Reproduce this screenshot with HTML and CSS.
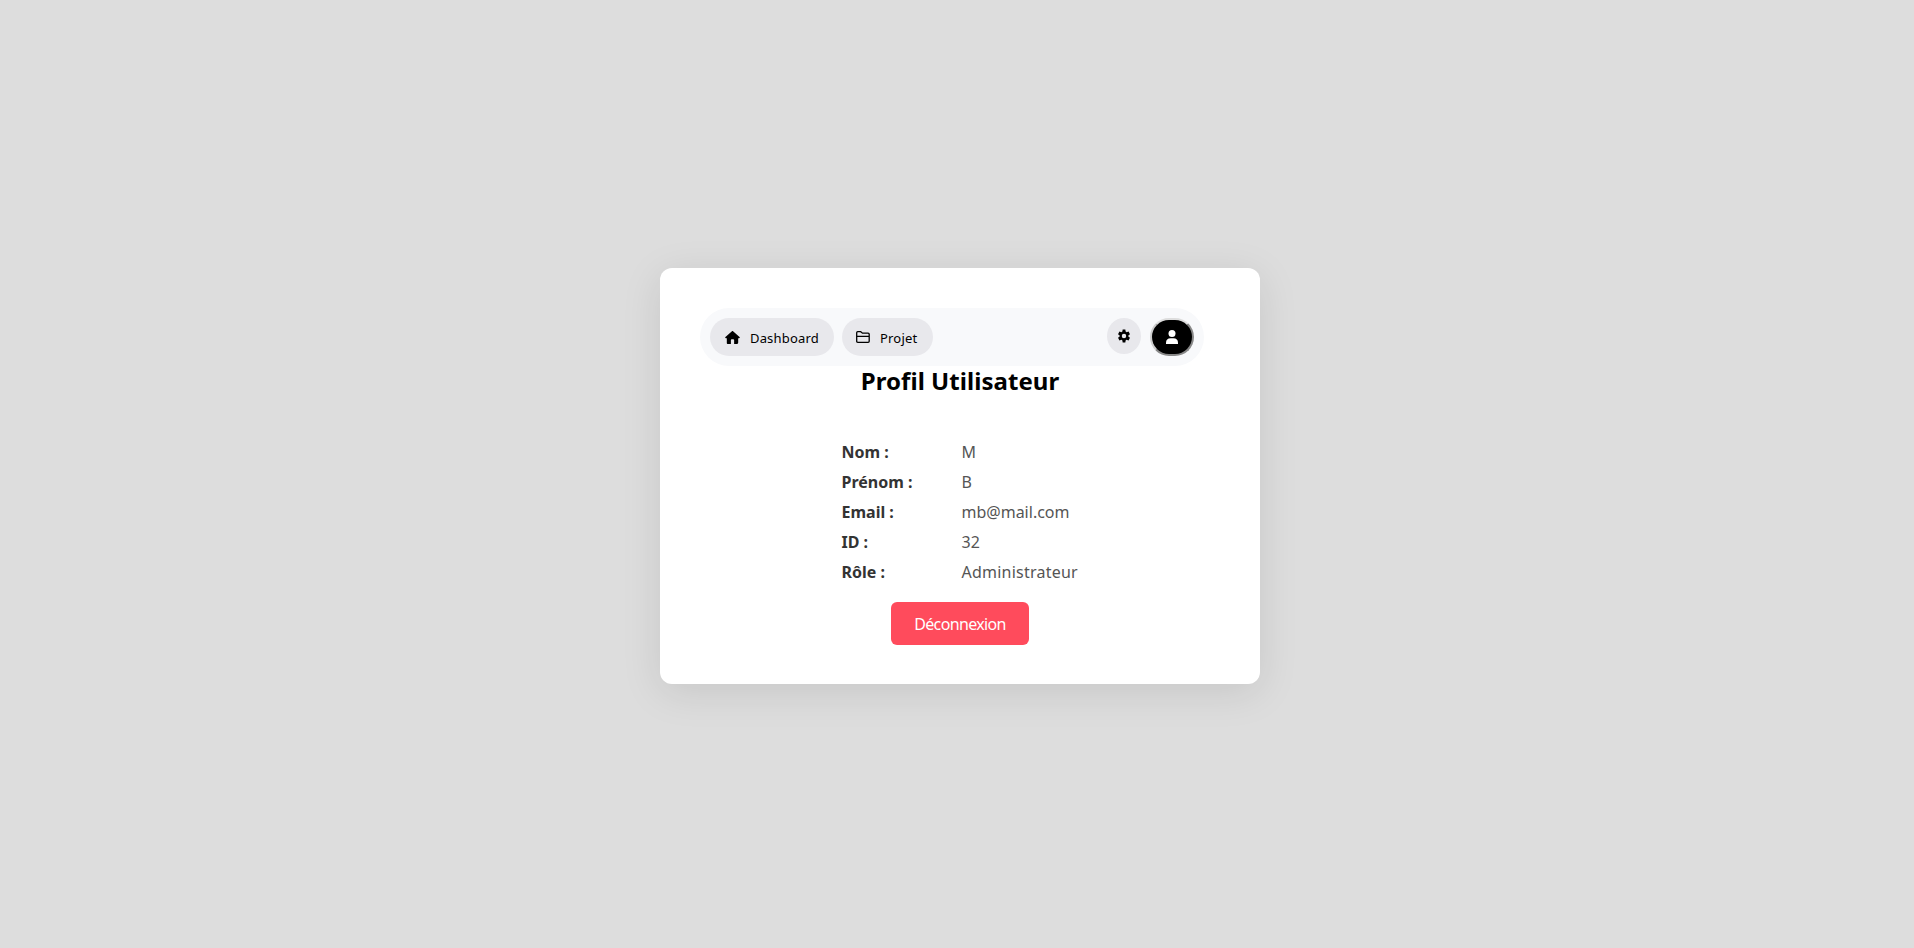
FILE: index.html
```html
<!DOCTYPE html>
<html lang="fr">
<head>
<meta charset="utf-8">
<title>Profil Utilisateur</title>
<link rel="stylesheet" href="styles.css">
</head>
<body>
<main class="card">
  <nav class="nav">
    <a class="pill dashboard"><svg class="home" viewBox="0 0 576 512"><path d="M575.8 255.5c0 18-15 32.1-32 32.1h-32l.7 160.2c0 35-18 64.2-40.5 64.2H352V352c0-18-14-32-32-32h-64c-18 0-32 14-32 32v160H104c-22 0-40-18-40-40V287.6H32c-18 0-32-14-32-32.1 0-9 3-17 10-24L266.400 8c7-7 15-8 22-8s15 2 21 7l255 224.500c8 7 12 15 11.400 24z"/></svg><span>Dashboard</span></a>
    <a class="pill projet"><svg class="folder" viewBox="0 0 14 12"><path d="M.7 5V1.700Q.7.700 1.700.700H4.700L6.500 2.200H12.100Q13.200 2.200 13.200 3.300V10.200Q13.200 11.300 12.100 11.300H1.800Q.7 11.300.7 10.200V5.300H13.200" fill="none" stroke="currentColor" stroke-width="1.300"/></svg><span>Projet</span></a>
    <a class="settings" aria-label="Paramètres"><svg viewBox="0 0 24 24"><path d="M19.430 12.980c.04-.32.070-.64.070-.98s-.03-.66-.07-.98l2.800-2.150-2.400-4.750-3.400 1.300c-.52-.4-1.080-.73-1.690-.98L14.300 1H9.700l-.44 3.440c-.61.25-1.170.59-1.690.98l-3.400-1.300-2.400 4.750 2.800 2.150c-.04.32-.07.65-.07.98s.03.66.07.98l-2.800 2.150 2.400 4.750 3.400-1.300c.52.4 1.080.73 1.690.98L9.700 23h4.600l.44-3.440c.61-.25 1.170-.59 1.690-.98l3.400 1.300 2.400-4.750zM12 15.800a3.800 3.800 0 1 1 0-7.600 3.800 3.800 0 0 1 0 7.600z"/></svg></a>
    <button class="user" aria-label="Profil"><svg viewBox="0 0 12 14"><circle cx="6" cy="3.500" r="3.500"/><path d="M0 14v-1.200Q0 8.200 4.700 8.200h2.600Q12 8.200 12 12.800V14z"/></svg></button>
  </nav>
  <h1><span>Profil Utilisateur</span></h1>
  <dl class="info">
    <dt>Nom :</dt><dd>M</dd>
    <dt>Prénom :</dt><dd>B</dd>
    <dt>Email :</dt><dd>mb@mail.com</dd>
    <dt>ID :</dt><dd>32</dd>
    <dt>Rôle :</dt><dd class="role">Administrateur</dd>
  </dl>
  <button class="logout">Déconnexion</button>
</main>
</body>
</html>
```
FILE: styles.css
```css
* { box-sizing: border-box; }
body {
  margin: 0;
  min-height: 100vh;
  padding: 4px 0 0 6px;
  display: flex;
  align-items: center;
  justify-content: center;
  background: #ddd;
  font-family: "Noto Sans", sans-serif;
}
svg { display: block; fill: currentColor; }
.card {
  width: 600px;
  height: 416px;
  padding: 40px;
  display: flex;
  flex-direction: column;
  align-items: center;
  background: #fff;
  border-radius: 12px;
  box-shadow: 0 8px 40px rgba(0, 0, 0, .1);
}
.nav {
  width: 504px;
  height: 58px;
  flex: none;
  align-self: flex-start;
  display: flex;
  align-items: flex-start;
  padding: 10px;
  background: #f8f9fb;
  border-radius: 29px;
}
.pill {
  height: 38px;
  display: flex;
  align-items: center;
  border-radius: 19px;
  background: #e8e8ec;
  font-size: 13px;
  color: #000;
}
.pill span { padding-top: 1px; }
.dashboard { width: 124px; padding-left: 15px; gap: 10px; margin-right: 8px; letter-spacing: .17px; }
.projet { width: 91px; padding-left: 14px; gap: 10px; letter-spacing: .2px; }
.home { width: 15px; height: 13px; }
.folder { width: 14px; height: 12px; }
.settings {
  width: 34px;
  height: 36px;
  margin-left: auto;
  margin-right: 9px;
  display: grid;
  place-items: center;
  border-radius: 50%;
  background: #e8e8ec;
}
.settings svg { width: 14px; height: 14px; }
.user {
  width: 44px;
  height: 38px;
  padding: 0;
  display: grid;
  place-items: center;
  border: 2px solid;
  border-color: #ddd #888 #888 #ccc;
  border-radius: 19px;
  background: #000;
  color: #fff;
}
.user svg { width: 12px; height: 14px; }
h1 {
  margin: 0 0 41px;
  font-size: 24px;
  line-height: 30px;
  font-weight: 700;
  letter-spacing: .05px;
}
.info {
  margin: 0 0 15px;
  width: 237px;
  display: grid;
  grid-template-columns: 120px 1fr;
  grid-auto-rows: 30px;
  line-height: 30px;
  font-size: 16px;
}
dt { font-weight: 700; color: #333; }
dd { margin: 0; color: #555; }
.role { letter-spacing: .23px; }
.logout {
  width: 138px;
  height: 43px;
  flex: none;
  padding: 0;
  border: 0;
  border-radius: 6px;
  background: #ff4b5c;
  color: #fff;
  font: 16px "Noto Sans", sans-serif;
  letter-spacing: -.65px;
}
```
